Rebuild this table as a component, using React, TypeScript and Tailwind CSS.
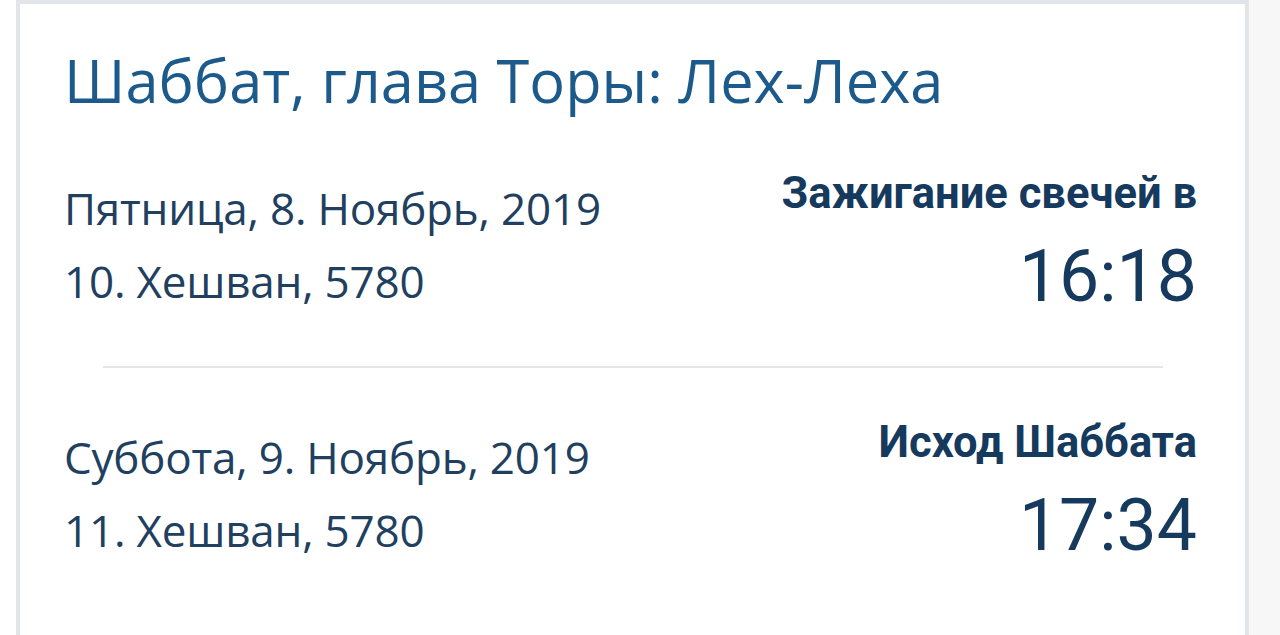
import React from 'react';

type Row = {
    date: string;
    hebrew: string;
    label: string;
    time: string;
};

const rows: Row[] = [
    { date: 'Пятница, 8. Ноябрь, 2019', hebrew: '10. Хешван, 5780', label: 'Зажигание свечей в', time: '16:18' },
    { date: 'Суббота, 9. Ноябрь, 2019', hebrew: '11. Хешван, 5780', label: 'Исход Шаббата', time: '17:34' },
];

const ShabbatRow: React.FC<{ row: Row }> = ({ row }) => (
    <div className="flex items-start justify-between">
        <div className="font-['Open_Sans',sans-serif] text-[44px] text-[#21405f]">
            <p className="leading-[73px] h-[73px] tracking-[-0.2px]">{row.date}</p>
            <p className="leading-[73px] h-[73px] tracking-[-0.2px]">{row.hebrew}</p>
        </div>
        <div className="flex flex-col items-end font-['Roboto',sans-serif] text-[#153a5e]">
            <p className="text-[43.5px] font-bold leading-[44px]">{row.label}</p>
            <p className="mt-[25px] text-[71.5px] leading-[72px]">{row.time}</p>
        </div>
    </div>
);

const App: React.FC = () => {
    return (
        <div className="flex h-[635px] w-full overflow-hidden bg-white">
            <div className="ml-[16px] h-[650px] w-[1233px] shrink-0 border-[4px] border-b-0 border-[#e1e4e8] bg-white pt-[38px] pl-[44px] pr-[48px]">
                <h1 className="font-['Open_Sans',sans-serif] text-[59.5px] leading-[76px] text-[#1d5a8c]">
                    Шаббат, глава Торы: Лех-Леха
                </h1>
                <div className="mt-[54px]">
                    <ShabbatRow row={rows[0]} />
                </div>
                <div className="mt-[48px] ml-[39px] mr-[34px] h-[2px] bg-[#e6e6e6]"></div>
                <div className="mt-[53px]">
                    <ShabbatRow row={rows[1]} />
                </div>
            </div>
            <div className="flex-1 bg-[#f7f7f8]"></div>
        </div>
    );
};

export default App;
